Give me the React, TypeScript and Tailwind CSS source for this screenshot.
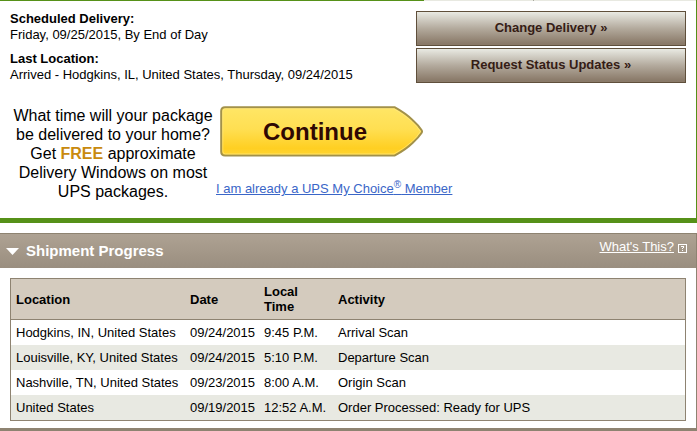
import React from 'react';

interface ScanEvent {
  location: string;
  date: string;
  time: string;
  activity: string;
}

const events: ScanEvent[] = [
  { location: 'Hodgkins, IN, United States', date: '09/24/2015', time: '9:45 P.M.', activity: 'Arrival Scan' },
  { location: 'Louisville, KY, United States', date: '09/24/2015', time: '5:10 P.M.', activity: 'Departure Scan' },
  { location: 'Nashville, TN, United States', date: '09/23/2015', time: '8:00 A.M.', activity: 'Origin Scan' },
  { location: 'United States', date: '09/19/2015', time: '12:52 A.M.', activity: 'Order Processed: Ready for UPS' },
];

const ActionButton: React.FC<{ label: string }> = ({ label }) => (
  <button
    type="button"
    className="h-[35px] w-full border border-[#5f4f3b] bg-linear-to-b from-[#e9eae3] via-[#b3aa9d] via-50% to-[#8a7a69] to-95% pb-px text-[13px] leading-4 font-bold text-[#351c15]"
  >
    {label} »
  </button>
);

const ContinueButton: React.FC = () => (
  <button type="button" className="relative block h-[51px] w-[204px]">
    <svg viewBox="0 0 204 51" className="absolute inset-0 h-full w-full" aria-hidden="true">
      <defs>
        <linearGradient id="gold" x1="0" y1="0" x2="0" y2="1">
          <stop offset="0" stopColor="#ffe666" />
          <stop offset="0.45" stopColor="#ffdf52" />
          <stop offset="0.85" stopColor="#ffcf22" />
          <stop offset="1" stopColor="#ffd534" />
        </linearGradient>
      </defs>
      <path
        d="M5 1.2H174.5Q186 7.5 193 14.5Q198.5 19.5 201.5 24Q202.5 25.5 201.5 27Q198.5 31.5 193 36.5Q186 43.5 174.5 49.6H5Q1.2 49.6 1.2 45.8V5Q1.2 1.2 5 1.2Z"
        fill="url(#gold)"
        stroke="#a2914a"
        strokeWidth="2"
      />
      <path
        d="M5.5 2.8H174Q185 8.8 192 15.5Q197 20 200.4 25.5Q197 31 192 35.5Q185 42 174 48H5.5Q2.8 48 2.8 45.3V5.5Q2.8 2.8 5.5 2.8Z"
        fill="none"
        stroke="#ffe98a"
        strokeOpacity="0.6"
      />
    </svg>
    <span className="relative block pr-3.5 text-2xl leading-[50px] font-bold text-[#2f0803]">Continue</span>
  </button>
);

const DeliverySummary: React.FC = () => (
  <section className="border-r border-b-[5px] border-r-[#569118] border-b-[#569118]">
    {/* tab strip edge */}
    <div className="flex h-px">
      <div className="grow bg-[#569118]" />
      <div className="w-[109px] bg-[#e8e9e1]" />
      <div className="w-px bg-[#a9a9a0]" />
      <div className="w-[162px] bg-[#e8e9e1]" />
    </div>

    <div className="flex items-start justify-between px-2.5 pt-2.5">
      <dl className="leading-4">
        <dt className="font-bold">Scheduled Delivery:</dt>
        <dd>Friday, 09/25/2015, By End of Day</dd>
        <dt className="mt-2 font-bold">Last Location:</dt>
        <dd>Arrived - Hodgkins, IL, United States, Thursday, 09/24/2015</dd>
      </dl>
      <div className="flex w-[270px] shrink-0 flex-col gap-0.5">
        <ActionButton label="Change Delivery" />
        <ActionButton label="Request Status Updates" />
      </div>
    </div>

    <div className="flex items-start pt-[23px] pb-[17px] pl-2.5">
      <p className="w-[206px] shrink-0 text-center text-base leading-[19px]">
        What time will your package
        <br />
        be delivered to your home?
        <br />
        Get <strong className="text-[#c98a0e]">FREE</strong> approximate
        <br />
        Delivery Windows on most
        <br />
        UPS packages.
      </p>
      <div>
        <div className="pl-1">
          <ContinueButton />
        </div>
        <a href="#my-choice" className="mt-6 block leading-4 text-[#3a66c8] underline">
          I am already a UPS My Choice<sup className="text-[10px] leading-none">®</sup> Member
        </a>
      </div>
    </div>
  </section>
);

const ShipmentProgress: React.FC = () => (
  <section className="mt-2.5 border-t border-r border-b-[3px] border-[#8e8371]">
    <header className="flex h-[34px] items-center justify-between bg-linear-to-b from-[#aea293] to-[#9a8e7f] pr-[9px] pl-1.5 text-white">
      <h2 className="flex items-center gap-[7px] text-[15px] leading-4 font-bold">
        <svg width="13" height="7" viewBox="0 0 13 7" aria-hidden="true">
          <path d="M0 0H13L6.5 7Z" fill="#fff" />
        </svg>
        Shipment Progress
      </h2>
      <div className="flex items-center gap-1 pb-2">
        <a href="#whats-this" className="leading-4 underline">What's This?</a>
        <svg width="9" height="9" viewBox="0 0 9 9" className="mt-0.5" shapeRendering="crispEdges" aria-hidden="true">
          <path d="M0 0H9V9H0ZM1 1V8H8V1Z" fill="#fff" fillRule="evenodd" />
          <path d="M3 2H6V4H5V5H4V4H5V3H3ZM4 6H5V7H4Z" fill="#fff" />
        </svg>
      </div>
    </header>

    <div className="px-2.5 pt-2.5 pb-[7px]">
      <table className="w-full table-fixed border-separate border-spacing-0 border border-[#8e8371] text-left leading-[15px]">
        <colgroup>
          <col className="w-[174px]" />
          <col className="w-[74px]" />
          <col className="w-[74px]" />
          <col />
        </colgroup>
        <thead>
          <tr className="h-[41px] bg-[#d4cbbe]">
            <th scope="col" className="border-b border-[#8e8371] px-[5px]">Location</th>
            <th scope="col" className="border-b border-[#8e8371] px-[5px]">Date</th>
            <th scope="col" className="border-b border-[#8e8371] px-[5px]">Local<br />Time</th>
            <th scope="col" className="border-b border-[#8e8371] px-[5px]">Activity</th>
          </tr>
        </thead>
        <tbody>
          {events.map((e) => (
            <tr key={e.date + e.time} className="h-[25px] whitespace-nowrap even:bg-[#e8e9e2]">
              <td className="px-[5px]">{e.location}</td>
              <td className="px-[5px]">{e.date}</td>
              <td className="px-[5px]">{e.time}</td>
              <td className="px-[5px]">{e.activity}</td>
            </tr>
          ))}
        </tbody>
      </table>
    </div>
  </section>
);

export default function App() {
  return (
    <main className="bg-white font-['Liberation_Sans',Arial,sans-serif] text-[13px] text-black">
      <DeliverySummary />
      <ShipmentProgress />
    </main>
  );
}
